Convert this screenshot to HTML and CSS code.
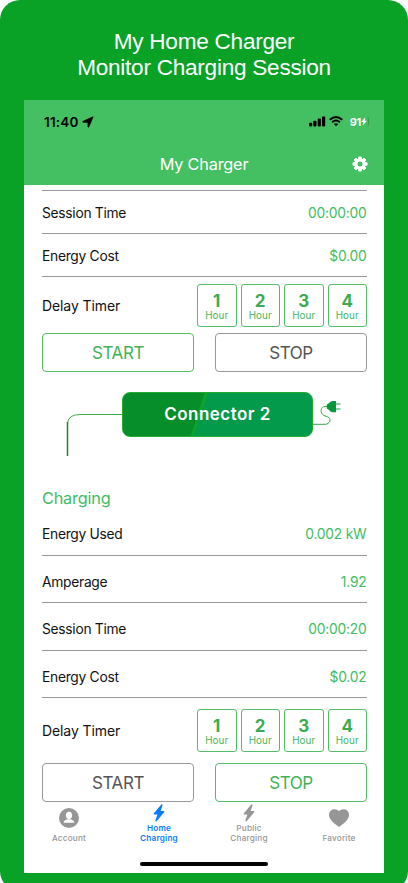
FILE: index.html
```html
<!DOCTYPE html>
<html lang="en">
<head>
<meta charset="utf-8">
<title>My Charger</title>
<link rel="stylesheet" href="styles.css">
</head>
<body>
<div class="poster">
  <h1 class="headline">My Home Charger<br>Monitor Charging Session</h1>
  <main class="phone">
    <header class="header">
      <div class="status">
        <span class="clock">11:40</span>
        <svg class="location" width="12" height="12" viewBox="0 0 12 12"><path d="M11.100.8 6.900 10.700Q6.200 11.700 6 10.700V6.300H1.200Q0 6 1.100 5.300Z" stroke="#000" stroke-width=".8" stroke-linejoin="round"/></svg>
        <svg class="signal" width="17" height="11" viewBox="0 0 17 11"><rect y="6.800" width="3.200" height="3.600" rx=".8"/><rect x="4.300" y="4.800" width="3.200" height="5.600" rx=".8"/><rect x="8.700" y="2.600" width="3.200" height="7.800" rx=".8"/><rect x="13" y=".5" width="3.200" height="9.900" rx=".8"/></svg>
        <svg class="wifi" width="14" height="11" viewBox="0 0 14 11"><path d="M.8 3.800Q7-1.800 13.200 3.800M3.100 6.200Q7 2.800 10.900 6.200" fill="none" stroke="#000" stroke-width="1.900"/><path d="M4.800 8Q7 6.300 9.200 8L7 10.300Z"/></svg>
        <span class="battery">91<svg width="6" height="9" viewBox="0 0 6 9"><path d="M4.300.3.200 4.900h2.200L1.600 8.700 5.900 3.800H3.700Z"/></svg><i></i></span>
      </div>
      <div class="navbar">
        <span class="title">My Charger</span>
        <svg class="gear" width="16" height="16" viewBox="-8 -8 16 16"><g fill="#fff"><rect x="-1.800" y="-7.500" width="3.600" height="15" rx="1"/><rect x="-1.800" y="-7.500" width="3.600" height="15" rx="1" transform="rotate(45)"/><rect x="-1.800" y="-7.500" width="3.600" height="15" rx="1" transform="rotate(90)"/><rect x="-1.800" y="-7.500" width="3.600" height="15" rx="1" transform="rotate(135)"/><circle r="5.600"/></g><circle r="2.500" fill="#44bf62"/></svg>
      </div>
    </header>

    <section class="session first">
      <div class="row"><span>Session Time</span><span class="value">00:00:00</span></div>
      <div class="row"><span>Energy Cost</span><span class="value">$0.00</span></div>
      <div class="delay"><span>Delay Timer</span>
        <div class="hours">
          <button><b>1</b>Hour</button><button><b>2</b>Hour</button><button><b>3</b>Hour</button><button><b>4</b>Hour</button>
        </div>
      </div>
      <div class="actions"><button class="on">START</button><button>STOP</button></div>
    </section>

    <div class="connector">
      <svg class="cable" width="56" height="66" viewBox="0 0 56 66"><path d="M56 22.500H14Q2.500 22.500 1.500 31" fill="none" stroke="#3eae4b"/><path d="M1.500 30V64" stroke="#108e2a" stroke-width="1.500"/></svg>
      <div class="pill">Connector 2</div>
      <svg class="plug" width="30" height="45" viewBox="0 0 30 45"><path d="M0 32.300H12C17 32.300 19 26.500 14.500 24.800L11 23.500C6.500 21 7.500 14.500 12 14.500H14" fill="none" stroke="#35a847"/><path d="M23 9H20Q17.500 9 16 11.200L13.800 12.500V16.500L16 18Q17.500 20.200 20 20.200H23Z" fill="#06983c"/><path d="M23 12H27.500M23 17H27.500" stroke="#239f3e" stroke-width="1.100"/></svg>
    </div>

    <section class="session second">
      <h2>Charging</h2>
      <div class="row"><span>Energy Used</span><span class="value">0.002 kW</span></div>
      <div class="row"><span>Amperage</span><span class="value">1.92</span></div>
      <div class="row"><span>Session Time</span><span class="value">00:00:20</span></div>
      <div class="row"><span>Energy Cost</span><span class="value">$0.02</span></div>
      <div class="delay"><span>Delay Timer</span>
        <div class="hours">
          <button><b>1</b>Hour</button><button><b>2</b>Hour</button><button><b>3</b>Hour</button><button><b>4</b>Hour</button>
        </div>
      </div>
      <div class="actions"><button>START</button><button class="on">STOP</button></div>
    </section>

    <nav class="tabs">
      <a class="tab single"><svg width="20" height="20" viewBox="0 0 20 20"><circle cx="10" cy="10" r="10" fill="#969696"/><ellipse cx="10" cy="7.300" rx="3.100" ry="3.600" fill="#fff"/><path d="M4.700 14.800C4.700 12.300 7 12 8.500 11.200H11.500C13 12 15.300 12.300 15.300 14.800Z" fill="#fff"/></svg><span>Account</span></a>
      <a class="tab active"><svg width="12" height="18" viewBox="0 0 12 18"><path d="M8.300.5.900 9.200Q.1 10.400 1.300 10.400H4.400L2.300 16.800Q2.600 18.100 3.800 17L11.200 8.200Q11.900 7 10.700 7H7.600L9.600 1.300Q9.500-.2 8.300.5Z"/></svg><span>Home<br>Charging</span></a>
      <a class="tab"><svg width="12" height="18" viewBox="0 0 12 18"><path d="M8.300.5.900 9.200Q.1 10.400 1.300 10.400H4.400L2.300 16.800Q2.600 18.100 3.800 17L11.200 8.200Q11.900 7 10.700 7H7.600L9.600 1.300Q9.500-.2 8.300.5Z"/></svg><span>Public<br>Charging</span></a>
      <a class="tab single"><svg width="20" height="20" viewBox="0 0 20 20"><path d="M10 3.300C7.500-.3 0 .5 0 7c0 5 6 9 10 12C14 16 20 12 20 7 20 .5 12.500-.3 10 3.300Z"/></svg><span>Favorite</span></a>
    </nav>
    <div class="home-bar"></div>
  </main>
</div>
</body>
</html>
```
FILE: styles.css
```css
* { box-sizing: border-box; }
html, body { margin: 0; height: 883px; overflow: hidden; background: #fff; }
body { font-family: Inter, "Liberation Sans", sans-serif; color: #111; }
svg { display: block; flex: none; }
button { font-family: inherit; background: #fff; padding: 0; }
.poster { width: 408px; height: 891px; border-radius: 20px; background: #0aa127; overflow: hidden; }
.headline { margin: 0; height: 100px; padding-top: 29px; text-align: center; color: #fff; font: 400 22.6px/25.5px "Liberation Sans", sans-serif; letter-spacing: -.26px; }
.phone { width: 360px; height: 773px; margin-left: 24px; background: #fff; }

.header { height: 85px; background: #44bf62; }
.status { display: flex; align-items: center; height: 43px; padding: 0 15px 0 20px; }
.clock { font-size: 13.5px; font-weight: 600; color: #000; width: 35px; letter-spacing: .2px; }
.location { margin-left: 3px; }
.signal { margin-left: auto; }
.wifi { margin-left: 3px; }
.battery { display: flex; align-items: center; margin-left: 7px; color: #fff; font-size: 11px; font-weight: 700; letter-spacing: -.3px; }
.battery svg { fill: #fff; }
.battery i { width: 2px; height: 9px; border-right: 1px solid #329d4b; border-radius: 0 2px 2px 0; }
.navbar { display: grid; grid-template-columns: 1fr auto 1fr; align-items: center; height: 41px; padding: 0 16px; }
.title { grid-column: 2; color: #fff; font-size: 16.3px; letter-spacing: -.2px; }
.gear { justify-self: end; }

.session { padding: 0 17px 0 18px; font-size: 14px; }
.row { display: flex; align-items: center; justify-content: space-between; border-bottom: 1px solid #999; font-size: 13.8px; letter-spacing: -.28px; }
.value { color: #3fbd61; letter-spacing: -.2px; padding-right: .5px; }
.delay { display: flex; justify-content: space-between; align-items: center; height: 43px; letter-spacing: -.1px; }
.hours { display: flex; gap: 4px; }
.hours button { display: flex; flex-direction: column; align-items: center; width: 39.5px; height: 43px; padding-top: 6px; border: 1px solid #53bd68; border-radius: 3px; color: #44b45a; font-size: 9.8px; line-height: 12px; letter-spacing: .1px; }
.hours b { font-size: 17px; line-height: 21px; margin-bottom: -2px; color: #3dac50; }
.actions { display: flex; justify-content: space-between; }
.actions button { width: 152px; height: 39px; padding-top: 1px; border: 1px solid #999; border-radius: 4px; color: #555; font-size: 17px; letter-spacing: -.4px; }
.actions .on { border-color: #53bd68; color: #3fb356; }
.first { padding-top: 5px; }
.first .row { height: 43.3px; padding-top: 1.5px; }
.first .row:first-child { height: 44px; border-top: 1px solid #999; }
.first .delay { margin-top: 6.7px; }
.first .actions { margin-top: 6px; }

.connector { display: flex; height: 66px; margin: 20px 0 0 42px; }
.pill { width: 191px; height: 45px; border: 1px solid #23aa33; border-radius: 8px; background: linear-gradient(108deg, #058e29 40%, #0ba52c 40.5%, #0ba52c 41.5%, #049a4b 42%); color: #fff; text-align: center; font-size: 17px; font-weight: 600; line-height: 43px; letter-spacing: .45px; }

.second { padding-top: 28.5px; }
.second h2 { margin: 0; height: 26px; color: #3fbd61; font-size: 16.3px; font-weight: 400; line-height: 24px; letter-spacing: -.2px; }
.second .row { height: 47.5px; padding-top: 5px; }
.second .row:nth-child(2) { height: 43.5px; padding-top: 0; }
.second .delay { margin-top: 11px; }
.second .actions { margin-top: 11px; }

.tabs { display: flex; justify-content: space-around; }
.tab { display: flex; flex-direction: column; align-items: center; width: 90px; padding-top: 2px; text-align: center; color: #969696; fill: #969696; font-size: 8.2px; font-weight: 500; line-height: 10px; letter-spacing: .2px; }
.tab span { margin-top: 1px; }
.tab.single { padding-top: 6px; }
.tab.single span { margin-top: 5px; }
.tab.active { color: #087cff; fill: #087cff; font-weight: 600; }
.home-bar { width: 128px; height: 4px; margin: 19px 0 0 116px; border-radius: 2px; background: #000; }
```
